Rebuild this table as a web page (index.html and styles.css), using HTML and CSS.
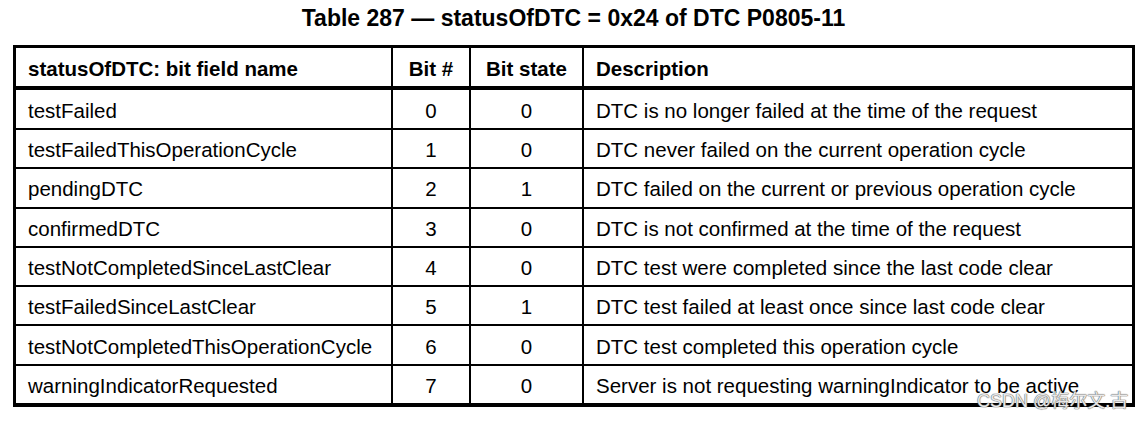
FILE: index.html
```html
<!DOCTYPE html>
<html>
<head>
<meta charset="utf-8">
<link rel="stylesheet" href="styles.css">
</head>
<body>
<div class="page">
  <h1 class="title">Table 287 — statusOfDTC = 0x24 of DTC P0805-11</h1>
  <div class="tbl">
    <div class="c h">statusOfDTC: bit field name</div>
    <div class="c h ctr sep">Bit #</div>
    <div class="c h ctr sep">Bit state</div>
    <div class="c h sep">Description</div>

    <div class="c">testFailed</div>
    <div class="c ctr sep">0</div>
    <div class="c ctr sep">0</div>
    <div class="c sep">DTC is no longer failed at the time of the request</div>

    <div class="c r">testFailedThisOperationCycle</div>
    <div class="c r ctr sep">1</div>
    <div class="c r ctr sep">0</div>
    <div class="c r sep">DTC never failed on the current operation cycle</div>

    <div class="c r">pendingDTC</div>
    <div class="c r ctr sep">2</div>
    <div class="c r ctr sep">1</div>
    <div class="c r sep">DTC failed on the current or previous operation cycle</div>

    <div class="c r">confirmedDTC</div>
    <div class="c r ctr sep">3</div>
    <div class="c r ctr sep">0</div>
    <div class="c r sep">DTC is not confirmed at the time of the request</div>

    <div class="c r">testNotCompletedSinceLastClear</div>
    <div class="c r ctr sep">4</div>
    <div class="c r ctr sep">0</div>
    <div class="c r sep">DTC test were completed since the last code clear</div>

    <div class="c r">testFailedSinceLastClear</div>
    <div class="c r ctr sep">5</div>
    <div class="c r ctr sep">1</div>
    <div class="c r sep">DTC test failed at least once since last code clear</div>

    <div class="c r">testNotCompletedThisOperationCycle</div>
    <div class="c r ctr sep">6</div>
    <div class="c r ctr sep">0</div>
    <div class="c r sep">DTC test completed this operation cycle</div>

    <div class="c r">warningIndicatorRequested</div>
    <div class="c r ctr sep">7</div>
    <div class="c r ctr sep">0</div>
    <div class="c r sep">Server is not requesting warningIndicator to be active</div>
  </div>
  <div class="wm">CSDN @梅尔文.古</div>
</div>
</body>
</html>
```

FILE: styles.css
```css
html, body {
  margin: 0;
  padding: 0;
  background: #fff;
}

.page {
  position: relative;
  width: 1147px;
  height: 421px;
  font-family: "Liberation Sans", Arial, sans-serif;
  color: #000;
}

.title {
  margin: 0;
  height: 45px;
  box-sizing: border-box;
  padding-top: 5px;
  font-size: 23px;
  line-height: 26px;
  font-weight: bold;
  text-align: center;
}

.tbl {
  margin-left: 13px;
  width: 1122px;
  box-sizing: border-box;
  border: 3px solid #000;
  border-bottom-width: 4px;
  display: grid;
  grid-template-columns: 375px 78px 113px 550px;
  grid-template-rows: 42px 38px repeat(7, 39.3px);
  font-size: 20.5px;
}

.c {
  box-sizing: border-box;
  display: flex;
  align-items: center;
  padding: 3px 12px 0;
  white-space: nowrap;
  line-height: 20px;
}

.h {
  font-weight: bold;
  border-bottom: 4px solid #000;
}

.r {
  border-top: 2px solid #000;
}

.sep {
  border-left: 2px solid #000;
}

.ctr {
  justify-content: center;
  padding-left: 0;
  padding-right: 0;
}

.wm {
  position: absolute;
  left: 977px;
  top: 398px;
  font-family: "Liberation Sans", "Noto Sans CJK SC", sans-serif;
  font-size: 18px;
  line-height: 6px;
  color: rgba(255, 255, 255, 0.85);
  text-shadow: 0 0 1px #6f6f6f, 0 0 1px #6f6f6f, 0 0 1px #6f6f6f;
  white-space: nowrap;
}
```
